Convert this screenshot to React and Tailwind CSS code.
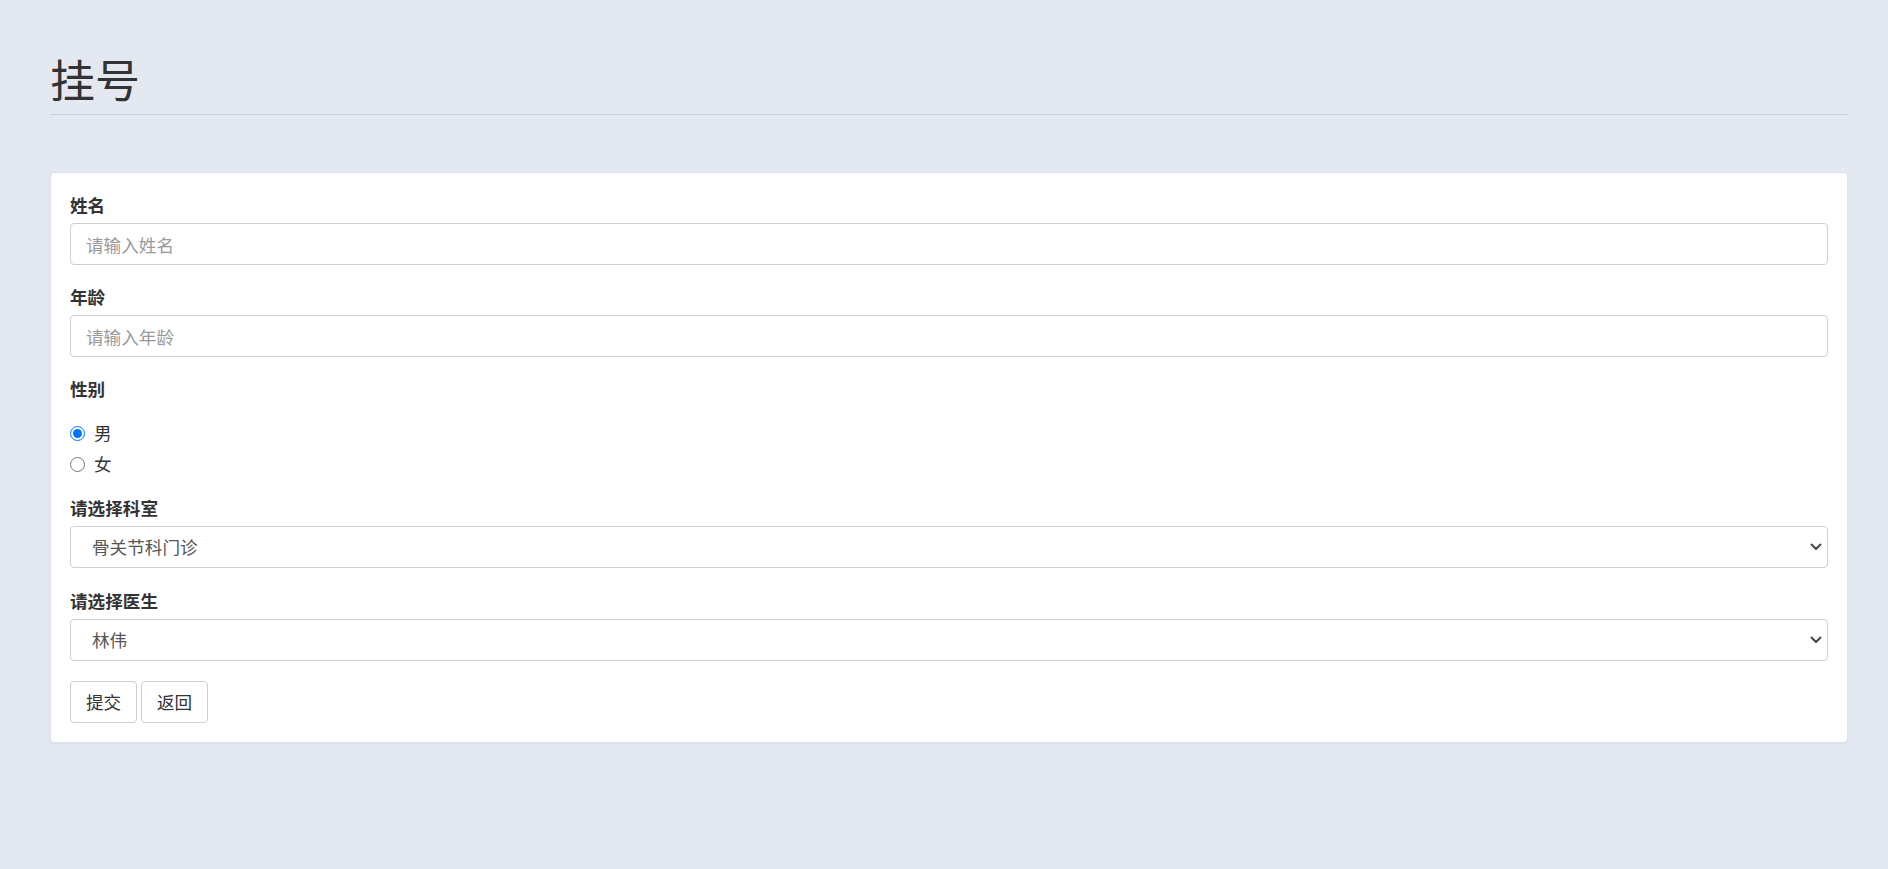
import { useState } from "react";

const font = {
  fontFamily: '"Noto Sans CJK SC", "Noto Sans", sans-serif',
};

function Chevron() {
  return (
    <svg
      width="12"
      height="8"
      viewBox="0 0 12 8"
      className="pointer-events-none absolute right-[6px] top-1/2 -translate-y-1/2"
    >
      <path
        d="M1.5 1.5 L6 6 L10.5 1.5"
        fill="none"
        stroke="#444"
        strokeWidth="2"
        strokeLinecap="round"
        strokeLinejoin="round"
      />
    </svg>
  );
}

function Field({ label, children, wide }) {
  return (
    <div className={wide ? "mb-[20px]" : "mb-[19px]"}>
      <label className="mb-[5px] block text-[17.6px] font-bold leading-[26px] text-[#333]">
        {label}
      </label>
      {children}
    </div>
  );
}

export default function App() {
  const [sex, setSex] = useState("男");
  const [dept, setDept] = useState("骨关节科门诊");
  const [doctor, setDoctor] = useState("林伟");

  return (
    <div
      className="min-h-[869px] bg-[#e4e9f1] pl-[50px] pr-[40px] pt-[52px] pb-10"
      style={font}
    >
      <div className="border-b border-[#c9d0d9] pb-[8px]">
        <h1 className="text-[45px] font-normal leading-[54px] text-[#333]">
          挂号
        </h1>
      </div>

      <div className="mt-[57px] rounded-[4px] border border-[#dde2e8] bg-white px-[19px] pt-[19px] pb-[19px] shadow-[0_1px_2px_rgba(0,0,0,0.06)]">
        <Field label="姓名">
          <input
            type="text"
            placeholder="请输入姓名"
            className="block h-[42px] w-full rounded-[4px] border border-[#cfcfcf] px-[15px] text-[17.6px] text-[#555] outline-none placeholder:text-[#999]"
          />
        </Field>

        <Field label="年龄">
          <input
            type="text"
            placeholder="请输入年龄"
            className="block h-[42px] w-full rounded-[4px] border border-[#cfcfcf] px-[15px] text-[17.6px] text-[#555] outline-none placeholder:text-[#999]"
          />
        </Field>

        <div className="mb-[15px]">
          <label className="block text-[17.6px] font-bold leading-[26px] text-[#333]">
            性别
          </label>
          <div className="mt-[16px]">
            {["男", "女"].map((s) => (
              <label
                key={s}
                className="flex h-[31px] items-center gap-[9px] text-[17.6px] text-[#333]"
              >
                <input
                  type="radio"
                  name="sex"
                  checked={sex === s}
                  onChange={() => setSex(s)}
                  className="m-0 h-[15px] w-[15px] accent-[#0075ff]"
                />
                {s}
              </label>
            ))}
          </div>
        </div>

        <Field label="请选择科室" wide>
          <div className="relative">
            <select
              value={dept}
              onChange={(e) => setDept(e.target.value)}
              className="block h-[42px] w-full appearance-none rounded-[4px] border border-[#cfcfcf] bg-white pl-[21px] pr-8 text-[17.6px] text-[#555] outline-none"
            >
              <option>骨关节科门诊</option>
              <option>内科门诊</option>
              <option>外科门诊</option>
            </select>
            <Chevron />
          </div>
        </Field>

        <Field label="请选择医生" wide>
          <div className="relative">
            <select
              value={doctor}
              onChange={(e) => setDoctor(e.target.value)}
              className="block h-[42px] w-full appearance-none rounded-[4px] border border-[#cfcfcf] bg-white pl-[21px] pr-8 text-[17.6px] text-[#555] outline-none"
            >
              <option>林伟</option>
              <option>王芳</option>
            </select>
            <Chevron />
          </div>
        </Field>

        <div className="flex gap-[4px]">
          <button className="h-[42px] w-[67px] rounded-[4px] border border-[#cfcfcf] bg-white text-[17.6px] text-[#333]">
            提交
          </button>
          <button className="h-[42px] w-[67px] rounded-[4px] border border-[#cfcfcf] bg-white text-[17.6px] text-[#333]">
            返回
          </button>
        </div>
      </div>
    </div>
  );
}
